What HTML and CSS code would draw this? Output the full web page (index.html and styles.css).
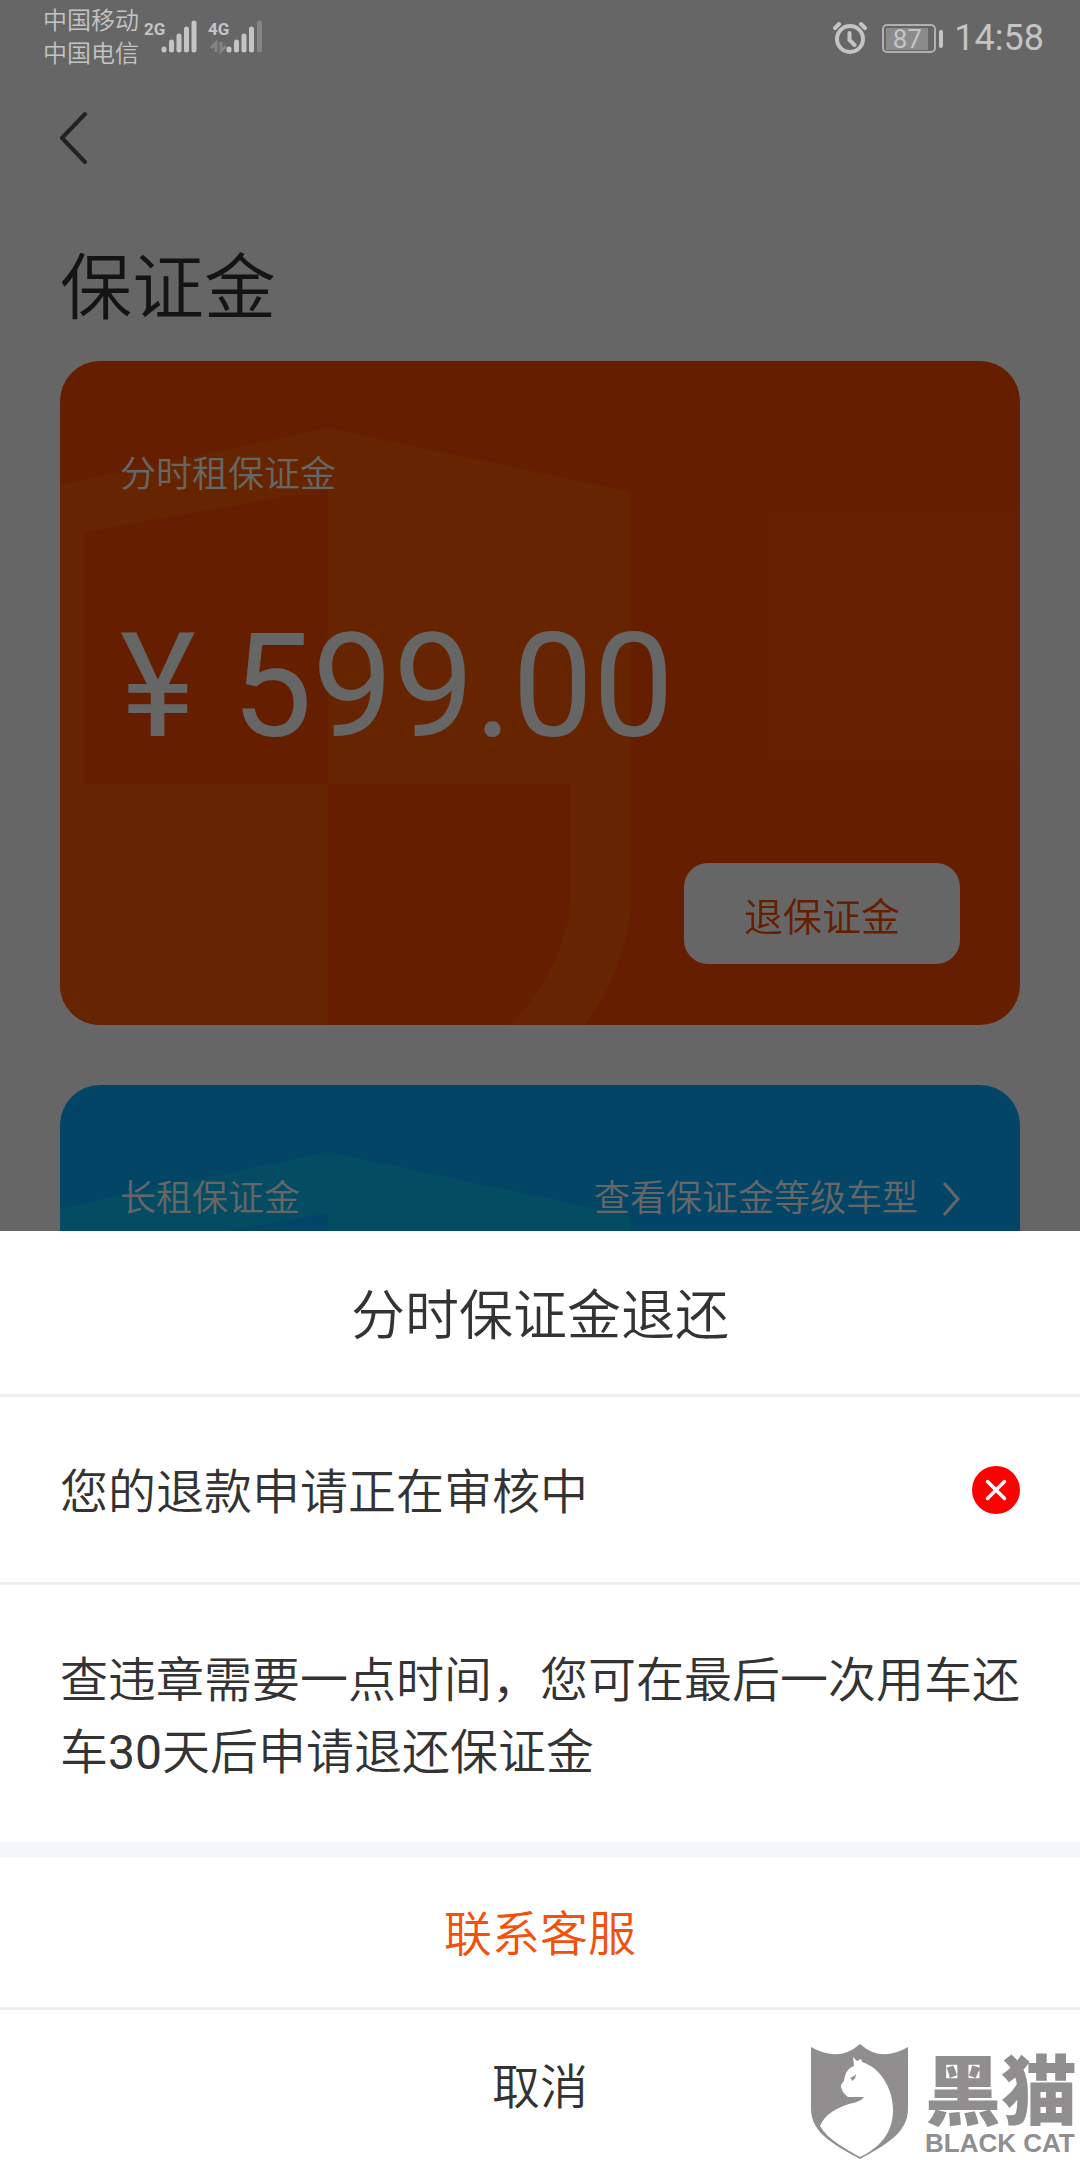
FILE: index.html
```html
<!DOCTYPE html>
<html lang="zh-CN">
<head>
<meta charset="utf-8">
<meta name="viewport" content="width=device-width, initial-scale=1">
<title>保证金</title>
<link rel="stylesheet" href="styles.css">
</head>
<body>
<div class="app">
  <main class="page">
    <button class="back" type="button" aria-label="返回">
      <svg width="28" height="54" viewBox="0 0 28 54"><path d="M25 3 2 27l23 24"/></svg>
    </button>
    <h1 class="title">保证金</h1>
    <section class="card card-hourly">
      <svg class="shield" viewBox="0 0 960 664"><path fill-rule="evenodd" d="M-35 131 268 67l303 64V529Q571 600 525 664H450Q511 600 511 529V423H268V664H-35ZM24 171V423H268V128Z"/></svg>
      <h2 class="card-label">分时租保证金</h2>
      <p class="price">¥ 599.00</p>
      <button class="refund" type="button">退保证金</button>
    </section>
    <section class="card card-long">
      <svg class="shield" viewBox="0 0 960 664"><path fill-rule="evenodd" d="M-35 131 268 67l303 64V529Q571 600 525 664H450Q511 600 511 529V423H268V664H-35ZM24 171V423H268V128Z"/></svg>
      <h2 class="card-label">长租保证金</h2>
      <a class="levels" href="#levels">查看保证金等级车型
        <svg width="18" height="36" viewBox="0 0 18 36"><path d="m2 2 14 16L2 34"/></svg>
      </a>
    </section>
  </main>
  <div class="scrim"></div>
  <header class="status">
    <div class="carriers"><span>中国移动</span><span>中国电信</span></div>
    <svg class="signals" width="122" height="40" viewBox="0 0 122 40">
      <text x="0" y="17">2G</text><text x="64" y="17">4G</text>
      <path class="bars" d="M20 31v1M27.500 24v8M35 18v14M42.500 11v21M50 5v27M85 31v1M92.500 24v8M100 18v14M107.500 11v21"/>
      <path class="bars faint" d="M115.500 5v27"/>
      <path class="data" d="M72 34V25l-5 5M77 24v9l5-5"/>
    </svg>
    <svg class="alarm" width="34" height="34" viewBox="0 0 34 34"><circle cx="17" cy="18" r="13"/><path d="M16.500 12v7l5 5M2 7l4-4M28 3l4 4"/></svg>
    <div class="battery"><span>87</span></div>
    <time class="clock">14:58</time>
  </header>
  <section class="sheet" role="dialog" aria-labelledby="sheet-title">
    <h2 class="sheet-title" id="sheet-title">分时保证金退还</h2>
    <div class="state">
      <span>您的退款申请正在审核中</span>
      <svg width="48" height="48" viewBox="0 0 48 48"><circle cx="24" cy="24" r="24" fill="#f00"/><path d="m15.500 15.500 17 17m0-17-17 17" stroke="#fff" stroke-width="3.500" stroke-linecap="round"/></svg>
    </div>
    <p class="note">查违章需要一点时间，您可在最后一次用车还车30天后申请退还保证金</p>
    <button class="action contact" type="button">联系客服</button>
    <button class="action" type="button">取消</button>
  </section>
  <div class="watermark">
    <svg width="98" height="116" viewBox="0 0 98 116">
      <path fill="#908e8f" d="M0 3Q28 19 49 0 70 19 97 3V65C97 90 72 102 49 115 26 102 0 90 0 65Z"/>
      <path fill="#fff" d="M42 13l4 4 4-2 1 3C70 24 82 45 82 66 82 85 73 101 51 112L49 113C35 105 17 96 9 82 14 70 26 64 38 60 46 58 50 57 53 53H37C34 50 31 48 31 45 29 43 30 40 33 37 34 29 37 24 43 22Z"/>
      <path fill="#908e8f" d="M39 34q5-2 6-4 0 5-4 7 0-2-2-3"/>
    </svg>
    <div class="brand"><span class="brand-cn">黑猫</span><span class="brand-en">BLACK CAT</span></div>
  </div>
</div>
</body>
</html>
```
FILE: styles.css
```css
* { box-sizing: border-box; }
body {
  margin: 0;
  font-family: Roboto, "Noto Sans CJK SC DemiLight", "Noto Sans CJK SC", sans-serif;
  font-weight: 400;
  color: #333;
  background: #fff;
}
h1, h2, p { margin: 0; font-weight: inherit; }
button { border: 0; padding: 0; margin: 0; background: none; font: inherit; color: inherit; cursor: pointer; }
svg { display: block; fill: none; flex: none; }

.app { position: relative; height: 100vh; overflow: hidden; }
.page { display: flex; flex-direction: column; padding: 111px 60px 0; }
.back { align-self: flex-start; }
.back path { stroke: #555; stroke-width: 4; stroke-linecap: round; stroke-linejoin: round; }
.title { margin: 70px 0 18px; font-size: 72px; line-height: 108px; }

.card { position: relative; display: flex; height: 664px; padding: 86px 60px 61px; border-radius: 40px; overflow: hidden; color: #fff; }
.card-hourly { flex-direction: column; background: #ff4d00; margin-bottom: 60px; }
.card-long { justify-content: space-between; align-items: flex-start; background: #05adff; }
.shield { position: absolute; inset: 0; width: 960px; }
.shield path { fill: #ff5a00; }
.card-long .shield path { fill: #0abef5; }
.card-label, .price, .levels { position: relative; }
.card-label, .levels { font-size: 36px; line-height: 56px; }
.price { margin-top: 100px; font-size: 144px; line-height: 168px; }
.refund { position: relative; align-self: flex-end; margin-top: auto; padding: 0 60px; height: 101px; border-radius: 24px; background: #fff; color: #ff4d00; font-size: 39px; }
.levels { display: flex; align-items: center; gap: 24px; color: inherit; text-decoration: none; }
.levels path { stroke: #fff; stroke-width: 3; }

.scrim { position: absolute; inset: 0; background: rgba(0, 0, 0, .6); }

.status { position: absolute; top: 0; left: 0; right: 0; display: flex; align-items: center; height: 76px; padding: 0 36px 0 43px; color: #c4c4c4; }
.carriers { display: flex; flex-direction: column; font-size: 24px; line-height: 33px; }
.signals { margin-left: 5px; }
.signals text { font: 700 17px Roboto, sans-serif; fill: #c4c4c4; }
.bars { stroke: #c4c4c4; stroke-width: 5; stroke-linecap: round; }
.faint { stroke: #858585; }
.data { stroke: #858585; stroke-width: 3; }
.alarm { margin-left: auto; stroke: #c4c4c4; stroke-width: 4; stroke-linecap: round; }
.battery { position: relative; width: 54px; height: 29px; margin: 0 18px 0 15px; border: 2px solid #b0b0b0; border-radius: 5px; padding: 2px; font-size: 26px; line-height: 22px; }
.battery span { display: block; width: 42px; background: #8b8b8b; text-align: center; }
.battery::after { content: ""; position: absolute; left: 55px; top: 4px; width: 4px; height: 18px; border-radius: 2px; background: #c4c4c4; }
.clock { font-size: 36px; }

.sheet { position: absolute; left: 0; right: 0; bottom: 0; background: #fff; font-size: 48px; line-height: 72px; }
.sheet-title { padding: 46px 60px 37px; font-size: 54px; line-height: 80px; text-align: center; border-bottom: 3px solid #eee; }
.state { display: flex; align-items: center; justify-content: space-between; padding: 0 60px; border-bottom: 3px solid #eee; }
.state span { padding: 60px 0 53px; }
.note { padding: 60px 60px 53px; border-bottom: 15px solid #f3f7fb; }
.action { display: block; width: 100%; height: 150px; padding-top: 6px; }
.contact { height: 153px; border-bottom: 3px solid #eee; color: #f2500b; }

.watermark { position: absolute; right: 3px; bottom: 0; display: flex; gap: 16px; color: #908e8f; }
.brand { display: flex; flex-direction: column; white-space: nowrap; }
.brand-cn { font-family: "Noto Sans CJK SC", sans-serif; font-size: 76px; font-weight: 900; line-height: 84px; }
.brand-en { font: 700 26px/30px "Liberation Sans", sans-serif; }
```
